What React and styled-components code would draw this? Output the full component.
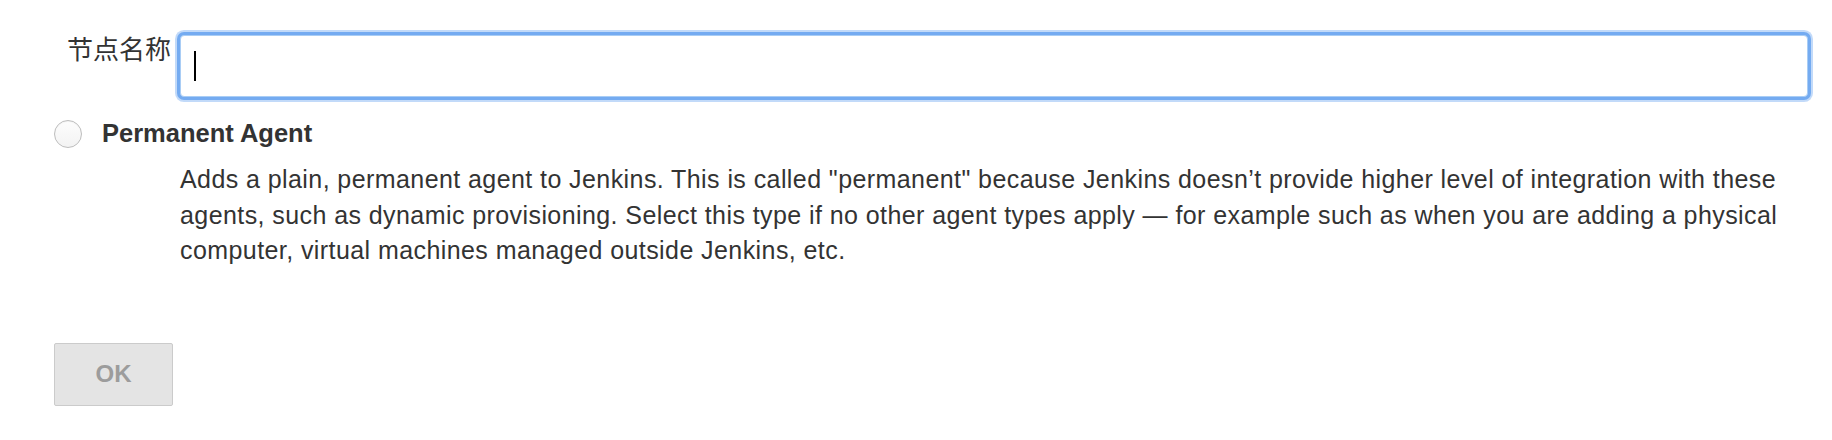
import React from "react";
import styled, { createGlobalStyle } from "styled-components";

const GlobalStyle = createGlobalStyle`
  body {
    margin: 0;
    background: #fff;
    font-family: "Liberation Sans", Helvetica, Arial, sans-serif;
    color: #333;
  }
`;

const Page = styled.div`
  padding: 30px 19px 0 54px;
`;

const NameRow = styled.div`
  display: flex;
  align-items: flex-start;
  padding-left: 13px;
`;

const Label = styled.label`
  font-family: "Liberation Sans", "Noto Sans CJK SC", sans-serif;
  font-size: 26px;
  line-height: 1;
  margin-top: 7px;
  margin-right: 4px;
  color: #333;
  white-space: nowrap;
`;

const InputWrap = styled.div`
  position: relative;
  flex: 1;
  padding: 5px;
`;

const NameInput = styled.input`
  display: block;
  box-sizing: border-box;
  width: 100%;
  height: 62px;
  border: 1px solid #a9cdf5;
  border-radius: 4px;
  outline: none;
  padding: 0 12px;
  font-size: 25px;
  font-family: inherit;
  background: #fff;
  box-shadow: 0 0 0 3px #74abf1, 0 0 0 5px rgba(120, 174, 242, 0.45);
  caret-color: transparent;
`;

const Caret = styled.span`
  position: absolute;
  left: 19px;
  top: 21px;
  width: 2px;
  height: 30px;
  background: #000;
`;

const Option = styled.div`
  margin-top: 17px;
`;

const OptionHead = styled.label`
  display: flex;
  align-items: center;
  gap: 20px;
  font-weight: bold;
  font-size: 25.5px;
  color: #333;
`;

const Radio = styled.span`
  box-sizing: border-box;
  width: 28px;
  height: 28px;
  border-radius: 50%;
  border: 1px solid #bdbdbd;
  background: linear-gradient(#fdfdfd, #f3f3f3);
  box-shadow: inset 0 1px 1px rgba(0, 0, 0, 0.04);
  flex: none;
`;

const Description = styled.p`
  margin: 14px 0 0 126px;
  font-size: 25px;
  line-height: 35.5px;
  letter-spacing: 0.42px;
  color: #333;
`;

const OkButton = styled.button`
  display: block;
  margin-top: 74px;
  width: 119px;
  height: 63px;
  border: 1px solid #cbcbcb;
  border-radius: 2px;
  background: #e4e4e4;
  color: #9c9c9c;
  font-family: "Liberation Sans", Helvetica, Arial, sans-serif;
  font-weight: bold;
  font-size: 24px;
`;

export default function App() {
  return (
    <>
      <GlobalStyle />
      <Page>
        <NameRow>
          <Label htmlFor="name">节点名称</Label>
          <InputWrap>
            <NameInput id="name" type="text" />
            <Caret />
          </InputWrap>
        </NameRow>
        <Option>
          <OptionHead>
            <Radio />
            Permanent Agent
          </OptionHead>
          <Description>
            Adds a plain, permanent agent to Jenkins. This is called "permanent" because Jenkins doesn’t provide higher level of integration with these agents, such as dynamic provisioning. Select this type if no other agent types apply — for example such as when you are adding a physical computer, virtual machines managed outside Jenkins, etc.
          </Description>
        </Option>
        <OkButton disabled>OK</OkButton>
      </Page>
    </>
  );
}
